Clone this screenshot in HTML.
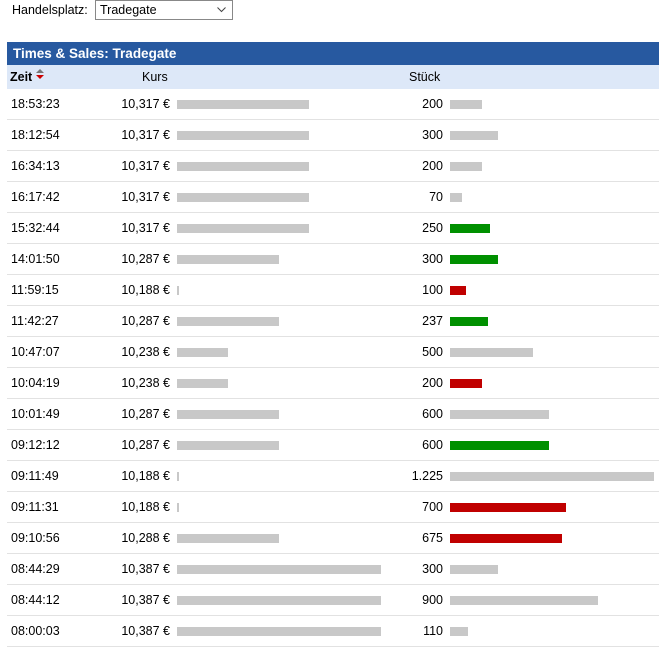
<!DOCTYPE html>
<html><head><meta charset="utf-8"><style>
body{margin:0;width:659px;height:666px;background:#fff;font-family:"Liberation Sans",Arial,sans-serif;font-size:12.5px;color:#000;position:relative;overflow:hidden}
.lbl{position:absolute;left:12px;top:3px;font-size:12.5px}
.sel{position:absolute;left:95px;top:0;width:138px;height:20px;border:1px solid #888;box-sizing:border-box;background:#fff}
.sel span{position:absolute;left:4px;top:2px;font-size:12.5px}
.sel svg{position:absolute;right:6px;top:6px}
.hd{position:absolute;left:7px;top:42px;width:652px;height:23px;background:#2759a0;color:#fff;font-weight:bold;font-size:13.5px;line-height:24px;text-indent:6px}
.ch{position:absolute;left:7px;top:65px;width:652px;height:24px;background:#dde8f8}
.ch div{position:absolute;top:5px}
.row{position:absolute;left:7px;width:652px;height:31px;border-bottom:1px solid #e2e2e2;box-sizing:border-box}
.t{position:absolute;left:4px;top:8px}
.k{position:absolute;right:489px;top:8px}
.s{position:absolute;right:216px;top:8px}
.b{position:absolute;top:11px;height:9px}
.g{background:#c8c8c8}.gr{background:#009000}.r{background:#c00000}
</style></head><body>
<div class="lbl">Handelsplatz:</div>
<div class="sel"><span>Tradegate</span><svg width="9" height="6"><path d="M0.5 0.5L4.5 4.5L8.5 0.5" stroke="#444" fill="none"/></svg></div>
<div class="hd">Times &amp; Sales: Tradegate</div>
<div class="ch"><div style="left:3px;font-weight:bold">Zeit</div>
<svg style="position:absolute;left:29px;top:3px" width="8" height="12"><path d="M0 5L4 1L8 5Z" fill="#777"/><path d="M0 7L4 11L8 7Z" fill="#c00"/></svg>
<div style="left:135px">Kurs</div><div style="left:402px">Stück</div></div>
<div id="rows"></div>
<script>
var d=[["18:53:23","10,317",132,"200",32,"g"],["18:12:54","10,317",132,"300",48,"g"],["16:34:13","10,317",132,"200",32,"g"],["16:17:42","10,317",132,"70",12,"g"],["15:32:44","10,317",132,"250",40,"gr"],["14:01:50","10,287",102,"300",48,"gr"],["11:59:15","10,188",2,"100",16,"r"],["11:42:27","10,287",102,"237",38,"gr"],["10:47:07","10,238",51,"500",83,"g"],["10:04:19","10,238",51,"200",32,"r"],["10:01:49","10,287",102,"600",99,"g"],["09:12:12","10,287",102,"600",99,"gr"],["09:11:49","10,188",2,"1.225",204,"g"],["09:11:31","10,188",2,"700",116,"r"],["09:10:56","10,288",102,"675",112,"r"],["08:44:29","10,387",204,"300",48,"g"],["08:44:12","10,387",204,"900",148,"g"],["08:00:03","10,387",204,"110",18,"g"]];
var h="";d.forEach(function(r,i){h+='<div class="row" style="top:'+(89+i*31)+'px"><div class="t">'+r[0]+'</div><div class="k">'+r[1]+' €</div><div class="b g" style="left:170px;width:'+r[2]+'px"></div><div class="s">'+r[3]+'</div><div class="b '+r[5]+'" style="left:443px;width:'+r[4]+'px"></div></div>'});
document.getElementById("rows").innerHTML=h;
</script>
</body></html>
